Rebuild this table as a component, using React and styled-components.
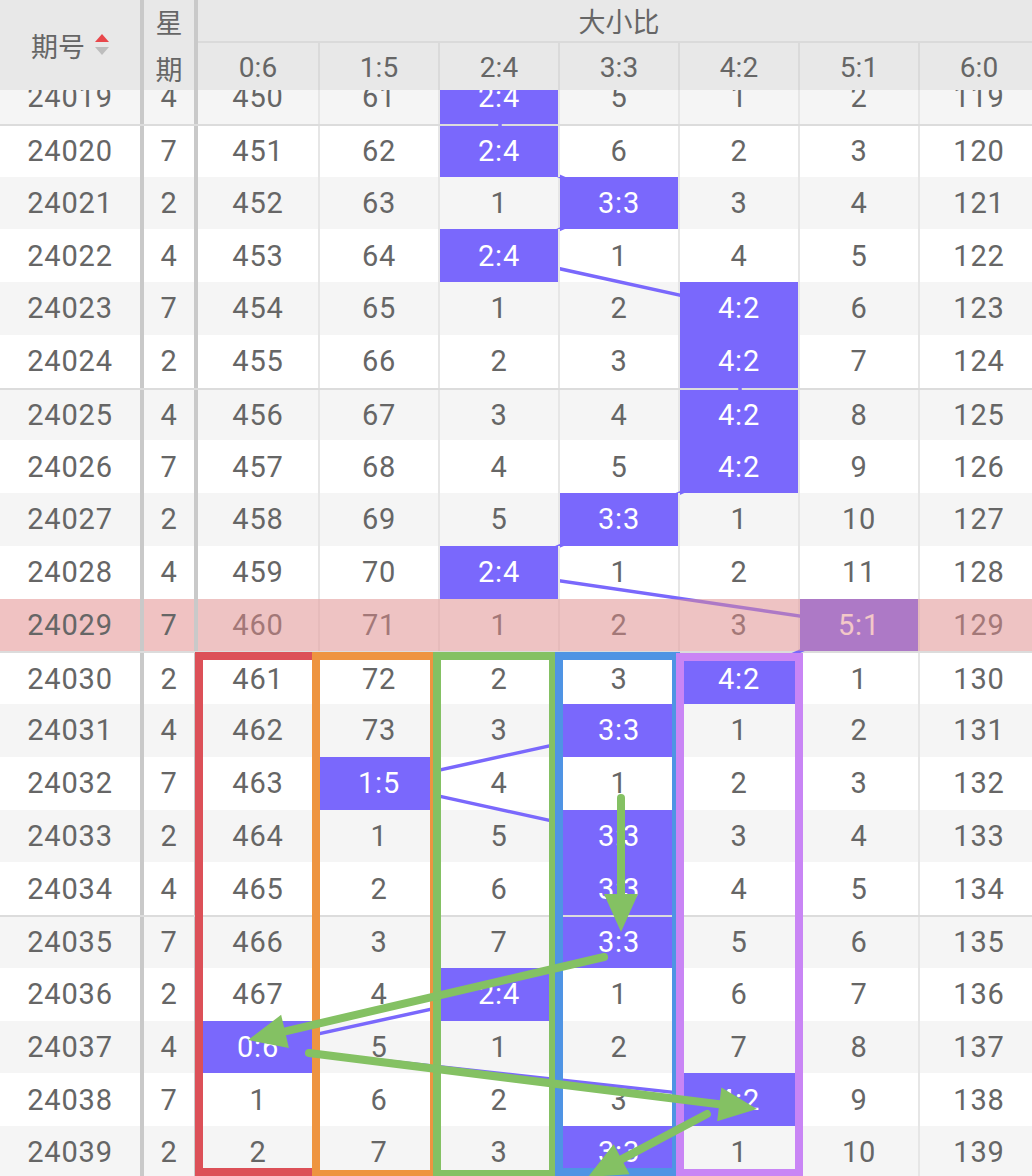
import React from "react";
import styled, { createGlobalStyle } from "styled-components";

const ROW_H = 52.75;
const LABELS = ["0:6", "1:5", "2:4", "3:3", "4:2", "5:1", "6:0"];
const PURPLE = "#7a68fc";
const COLS = "144px 54px 122px repeat(6, 120px)";

const DATA = [
  ["24019", 4, 2, [450, 61, 0, 5, 1, 2, 119]],
  ["24020", 7, 2, [451, 62, 0, 6, 2, 3, 120]],
  ["24021", 2, 3, [452, 63, 1, 0, 3, 4, 121]],
  ["24022", 4, 2, [453, 64, 0, 1, 4, 5, 122]],
  ["24023", 7, 4, [454, 65, 1, 2, 0, 6, 123]],
  ["24024", 2, 4, [455, 66, 2, 3, 0, 7, 124]],
  ["24025", 4, 4, [456, 67, 3, 4, 0, 8, 125]],
  ["24026", 7, 4, [457, 68, 4, 5, 0, 9, 126]],
  ["24027", 2, 3, [458, 69, 5, 0, 1, 10, 127]],
  ["24028", 4, 2, [459, 70, 0, 1, 2, 11, 128]],
  ["24029", 7, 5, [460, 71, 1, 2, 3, 0, 129]],
  ["24030", 2, 4, [461, 72, 2, 3, 0, 1, 130]],
  ["24031", 4, 3, [462, 73, 3, 0, 1, 2, 131]],
  ["24032", 7, 1, [463, 0, 4, 1, 2, 3, 132]],
  ["24033", 2, 3, [464, 1, 5, 0, 3, 4, 133]],
  ["24034", 4, 3, [465, 2, 6, 0, 4, 5, 134]],
  ["24035", 7, 3, [466, 3, 7, 0, 5, 6, 135]],
  ["24036", 2, 2, [467, 4, 0, 1, 6, 7, 136]],
  ["24037", 4, 0, [0, 5, 1, 2, 7, 8, 137]],
  ["24038", 7, 4, [1, 6, 2, 3, 0, 9, 138]],
  ["24039", 2, 3, [2, 7, 3, 0, 1, 10, 139]],
];

const PINK_ROW = 10;

const Global = createGlobalStyle`
  html, body { margin: 0; padding: 0; background: #fff; }
  body { font-family: Roboto, "Noto Sans CJK SC", sans-serif; }
`;

const Page = styled.div`
  position: relative;
  width: 1032px;
  height: 1176px;
  overflow: hidden;
  color: #666;
`;

const Header = styled.div`
  display: grid;
  grid-template-columns: ${COLS};
  grid-template-rows: 43px 47px;
  width: 1040px;
  background: #e8e8e8;
`;

const HeadCell = styled.div`
  box-sizing: border-box;
  display: flex;
  align-items: center;
  justify-content: center;
  font-size: ${(p) => (p.$cjk ? "27px" : "28px")};
  font-family: ${(p) =>
    p.$cjk ? '"Noto Sans CJK SC", sans-serif' : "Roboto, sans-serif"};
  color: #666;
`;

const IdHead = styled(HeadCell)`
  grid-row: 1 / 3;
  border-right: 4px solid #c9c9c9;
  gap: 10px;
`;

const WeekHead = styled(HeadCell)`
  grid-row: 1 / 3;
  flex-direction: column;
  border-right: 4px solid #c9c9c9;
  line-height: 47px;
`;

const GroupHead = styled(HeadCell)`
  grid-column: 3 / 10;
  border-bottom: 2px solid #dadada;
`;

const LabelHead = styled(HeadCell)`
  border-right: 2px solid #dadada;
  padding-top: 2px;
`;

const BodyClip = styled.div`
  position: relative;
  height: 1086px;
  overflow: hidden;
`;

const BodyInner = styled.div`
  position: relative;
  width: 1040px;
  margin-top: -19px;
`;

const Row = styled.div`
  box-sizing: border-box;
  display: grid;
  grid-template-columns: ${COLS};
  height: ${ROW_H}px;
  background: ${(p) => (p.$odd ? "#fff" : "#f5f5f5")};
  border-top: ${(p) => (p.$sep ? "2px solid #dcdcdc" : "none")};
`;

const Cell = styled.div`
  box-sizing: border-box;
  display: flex;
  align-items: center;
  justify-content: center;
  font-size: 29px;
  letter-spacing: 0.8px;
  color: #666;
  border-right: ${(p) => (p.$thick ? "4px solid #c9c9c9" : "2px solid #e6e6e6")};
  background: ${(p) => (p.$pink ? "#f0c2c2" : "transparent")};
`;

const HitCell = styled(Cell)`
  position: relative;
  z-index: 2;
  background: ${PURPLE};
  color: #fff;
`;

const PinkOverlay = styled.div`
  position: absolute;
  left: 198px;
  width: 842px;
  top: ${PINK_ROW * ROW_H}px;
  height: ${ROW_H}px;
  background: rgba(230, 140, 140, 0.48);
  z-index: 3;
`;

const TrendSvg = styled.svg`
  position: absolute;
  left: 0;
  top: 0;
  z-index: 1;
  pointer-events: none;
`;

const NoteSvg = styled.svg`
  position: absolute;
  left: 0;
  top: 0;
  z-index: 10;
  pointer-events: none;
`;

function SortIcon() {
  return (
    <svg width="14" height="22" viewBox="0 0 14 22">
      <polygon points="7,0 14,8 0,8" fill="#e8474b" />
      <polygon points="0,13 14,13 7,21" fill="#bdbdbd" />
    </svg>
  );
}

const cx = (c) => (c === 0 ? 259 : 320 + (c - 1) * 120 + 60);
const cy = (r) => r * ROW_H + ROW_H / 2;

function Arrow({ x1, y1, x2, y2, color }) {
  const dx = x2 - x1;
  const dy = y2 - y1;
  const len = Math.hypot(dx, dy);
  const ux = dx / len;
  const uy = dy / len;
  const hl = 38;
  const hw = 17;
  const bx = x2 - ux * hl;
  const by = y2 - uy * hl;
  const px = -uy * hw;
  const py = ux * hw;
  return (
    <g>
      <line
        x1={x1}
        y1={y1}
        x2={x2 - ux * (hl - 4)}
        y2={y2 - uy * (hl - 4)}
        stroke={color}
        strokeWidth="8"
        strokeLinecap="round"
      />
      <polygon
        points={`${x2},${y2} ${bx + px},${by + py} ${bx - px},${by - py}`}
        fill={color}
      />
    </g>
  );
}

export default function App() {
  const lines = [];
  for (let i = 1; i < DATA.length; i++) {
    lines.push(
      <line
        key={i}
        x1={cx(DATA[i - 1][2])}
        y1={cy(i - 1)}
        x2={cx(DATA[i][2])}
        y2={cy(i)}
        stroke={PURPLE}
        strokeWidth="3.5"
      />
    );
  }
  const green = "#84c163";
  return (
    <Page>
      <Global />
      <Header>
        <IdHead $cjk>
          <span>期号</span>
          <SortIcon />
        </IdHead>
        <WeekHead $cjk>
          <span>星</span>
          <span>期</span>
        </WeekHead>
        <GroupHead $cjk>大小比</GroupHead>
        {LABELS.map((l) => (
          <LabelHead key={l}>{l}</LabelHead>
        ))}
      </Header>
      <BodyClip>
        <BodyInner>
          <TrendSvg width="1040" height={DATA.length * ROW_H}>
            {lines}
          </TrendSvg>
          {DATA.map(([id, wk, hit, vals], i) => (
            <Row key={id} $odd={i % 2 === 1} $sep={i % 5 === 1}>
              <Cell $thick $pink={i === PINK_ROW}>{id}</Cell>
              <Cell $thick $pink={i === PINK_ROW}>{wk}</Cell>
              {vals.map((v, c) =>
                c === hit ? (
                  <HitCell key={c}>{LABELS[c]}</HitCell>
                ) : (
                  <Cell key={c}>{v}</Cell>
                )
              )}
            </Row>
          ))}
          <PinkOverlay />
        </BodyInner>
      </BodyClip>
      <NoteSvg width="1032" height="1176">
        <rect x="199" y="656" width="117" height="516" fill="none" stroke="#dc5058" strokeWidth="8" />
        <rect x="316" y="656" width="118" height="518" fill="none" stroke="#ee9440" strokeWidth="8" />
        <rect x="437" y="656" width="116" height="518" fill="none" stroke={green} strokeWidth="8" />
        <rect x="559" y="656" width="117" height="516" fill="none" stroke="#4f94e4" strokeWidth="8" />
        <rect x="680" y="657" width="119" height="516" fill="none" stroke="#c985f5" strokeWidth="8" />
        <Arrow x1={621} y1={798} x2={621} y2={932} color={green} />
        <Arrow x1={604} y1={957} x2={248} y2={1040} color={green} />
        <Arrow x1={309} y1={1053} x2={757} y2={1109} color={green} />
        <Arrow x1={707} y1={1114} x2={588} y2={1177} color={green} />
      </NoteSvg>
    </Page>
  );
}
